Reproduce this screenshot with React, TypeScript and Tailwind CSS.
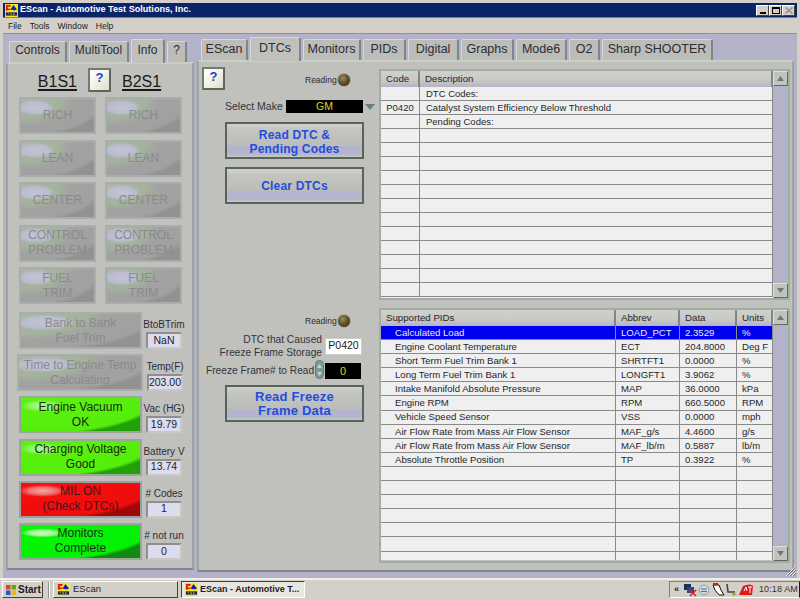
import React from "react";

const GRAY = "border-2 border-[#a9aeaa] text-[#8a8a8c] bg-[radial-gradient(ellipse_26%_24%_at_20%_26%,#c3c3d4_0%,#bcbcd0_70%,transparent_100%),radial-gradient(ellipse_60%_80%_at_10%_0%,#a8b8a2_0%,#a3b29c_75%,transparent_100%),radial-gradient(ellipse_104%_122%_at_15%_-10%,#a3a3a3_0%,#a1a1a1_92%,#929292_100%)]";
const LIME = "border-2 border-[#9aa69a] text-[#1c2a10] bg-[radial-gradient(ellipse_18%_18%_at_18%_24%,#b6f79a_0%,#8ff568_60%,transparent_100%),radial-gradient(ellipse_104%_122%_at_15%_-10%,#5bf40e_0%,#55ee0c_94%,#22a008_100%)]";
const RED = "border-2 border-[#9aa0a0] text-[#3a1a20] bg-[radial-gradient(ellipse_20%_18%_at_18%_24%,#f4a8a8_0%,#f07070_60%,transparent_100%),radial-gradient(ellipse_104%_122%_at_15%_-10%,#fb0f0f_0%,#ee0c0c_94%,#a00808_100%)]";
const GREEN = "border-2 border-[#9aa69a] text-[#143014] bg-[radial-gradient(ellipse_18%_14%_at_18%_24%,#d0f8c0_0%,#a0f890_60%,transparent_100%),radial-gradient(ellipse_104%_122%_at_15%_-10%,#06fa06_0%,#04f004_94%,#108a10_100%)]";

function Logo({ s = 14 }: { s?: number }) {
  return (
    <svg width={s} height={s} viewBox="0 0 14 14" className="shrink-0">
      <rect width="14" height="14" fill="#f8e818" />
      <rect x="1" y="1" width="5" height="2" fill="#e01010" />
      <rect x="1" y="3" width="2" height="4" fill="#e01010" />
      <rect x="1" y="5" width="5" height="1.5" fill="#e01010" />
      <path d="M6 6 L9 1 L13 6 L10 7 Z" fill="#1020c0" />
      <rect x="1" y="9" width="12" height="3.5" fill="#202050" />
      <rect x="3" y="10" width="1" height="1" fill="#f8e818" />
      <rect x="6" y="10" width="1" height="2" fill="#f8e818" />
      <rect x="9" y="10" width="1" height="2" fill="#f8e818" />
    </svg>
  );
}

function Tab({ w, active, children, size, pad }: { w: string; active?: boolean; children: React.ReactNode; size: string; pad: string }) {
  return (
    <div
      className={`${w} ${size} ${pad} flex items-center justify-center text-[#2c2c34] border-t border-l border-r-2 border-t-[#d8d8d4] border-l-[#d8d8d4] border-r-[#80858a] rounded-t-[2px] ${active ? "h-[24px] bg-[#c0c0bc] -mb-[1px] z-10" : "h-[21px] bg-[#bcbcb8]"}`}
    >
      {children}
    </div>
  );
}

function Help({ cls }: { cls: string }) {
  return (
    <div className={`${cls} flex items-center justify-center border-2 border-t-[#707a70] border-l-[#707a70] border-r-[#5c665c] border-b-[#5c665c] bg-[linear-gradient(135deg,#ffffff_0%,#f4f2e4_50%,#e0dccc_100%)] text-[#1a3fd0] font-bold text-[13px] pb-[4px]`}>
      ?
    </div>
  );
}

function Status({ cls, tone, a, b }: { cls: string; tone: string; a: string; b?: string }) {
  return (
    <div className={`${cls} ${tone} h-[37px] flex flex-col items-center justify-center text-[12px] leading-[15px]`}>
      <span>{a}</span>
      {b && <span>{b}</span>}
    </div>
  );
}

function Readout({ label, value }: { label: string; value: string }) {
  return (
    <div className="w-[42px] ml-[1px] flex flex-col items-center justify-end">
      <span className="text-[10px] leading-[13px] mb-[1px] whitespace-nowrap text-[#2c2c38]">{label}</span>
      <div className="w-[36px] h-[17px] flex items-center justify-center bg-[#dcdcee] border-2 border-t-[#8f8f8f] border-l-[#8f8f8f] border-r-[#c8c8c8] border-b-[#c8c8c8] text-[10.5px] text-[#22222c]">
        {value}
      </div>
    </div>
  );
}

function ActionButton({ cls, lines, size }: { cls: string; lines: string[]; size: string }) {
  return (
    <div className={`${cls} ${size} ml-[26px] w-[139px] h-[37px] flex flex-col items-center justify-center font-bold leading-[14px] tracking-[0.2px] text-[#1f4fdc] border-2 border-[#55655a] bg-[linear-gradient(180deg,#d2d2cc_0%,#c4c4c0_18%,#bcbcb8_66%,#b4b4cc_68%,#b4b4cc_90%,#c8c8c4_100%)]`}>
      {lines.map((l) => (
        <span key={l}>{l}</span>
      ))}
    </div>
  );
}

function Led() {
  return <div className="w-[14px] h-[14px] rounded-full border border-[#a8a89c] bg-[radial-gradient(circle_at_40%_35%,#9a8e5c_0%,#5e5428_45%,#2e2a14_100%)]" />;
}

function ScrollBtn({ up }: { up?: boolean }) {
  return (
    <div className="w-[15px] h-[15px] shrink-0 flex items-center justify-center bg-[#c0c4bc] border border-t-[#e0e0dc] border-l-[#e0e0dc] border-r-[#5c6a60] border-b-[#5c6a60]">
      <svg width="7" height="5" viewBox="0 0 7 5">
        <path d={up ? "M3.5 0 L7 5 L0 5 Z" : "M0 0 L7 0 L3.5 5 Z"} fill="#6a7a78" />
      </svg>
    </div>
  );
}

function Scrollbar() {
  return (
    <div className="w-[15px] bg-[#b4b2c8] flex flex-col justify-between">
      <ScrollBtn up />
      <ScrollBtn />
    </div>
  );
}

function Head({ w, children }: { w: string; children: React.ReactNode }) {
  return (
    <div className={`${w} h-full flex items-center pl-[5px] text-[9.7px] text-[#26262c] border-r-2 border-[#80858a] bg-[linear-gradient(180deg,#d0d0cc_0%,#c8c8c4_60%,#b4b4c4_100%)]`}>
      {children}
    </div>
  );
}

function Cell({ w, children, cls = "" }: { w: string; children?: React.ReactNode; cls?: string }) {
  return <div className={`${w} h-full pt-[1px] flex items-center border-r border-[#8a8a8a] whitespace-nowrap overflow-hidden ${cls}`}>{children}</div>;
}

const dtc = [
  ["", "DTC Codes:"],
  ["P0420", "Catalyst System Efficiency Below Threshold"],
  ["", "Pending Codes:"],
];

const pids = [
  ["Calculated Load", "LOAD_PCT", "2.3529", "%"],
  ["Engine Coolant Temperature", "ECT", "204.8000", "Deg F"],
  ["Short Term Fuel Trim Bank 1", "SHRTFT1", "0.0000", "%"],
  ["Long Term Fuel Trim Bank 1", "LONGFT1", "3.9062", "%"],
  ["Intake Manifold Absolute Pressure", "MAP", "36.0000", "kPa"],
  ["Engine RPM", "RPM", "660.5000", "RPM"],
  ["Vehicle Speed Sensor", "VSS", "0.0000", "mph"],
  ["Air Flow Rate from Mass Air Flow Sensor", "MAF_g/s", "4.4600", "g/s"],
  ["Air Flow Rate from Mass Air Flow Sensor", "MAF_lb/m", "0.5887", "lb/m"],
  ["Absolute Throttle Position", "TP", "0.3922", "%"],
];

const blank15 = Array.from({ length: 15 }, (_, i) => dtc[i] ?? ["", ""]);
const blank17 = Array.from({ length: 17 }, (_, i) => pids[i] ?? ["", "", "", ""]);

const L = "text-[12px]";
const R = "text-[12.5px]";

export default function App() {
  return (
    <div className="w-[800px] h-[600px] overflow-hidden flex flex-col bg-[#d4d0c8] font-['Liberation_Sans',Arial,sans-serif] relative">
      <div className="mx-[3px] mt-[3px] h-[14px] bg-[#0a246a] flex items-center text-white text-[9.1px] font-bold pl-[2px] gap-[2px] shrink-0">
        <Logo s={13} />
        <span className="flex-1 whitespace-nowrap">EScan - Automotive Test Solutions, Inc.</span>
        <div className="flex items-center mr-[2px]">
          {["min", "max", "close"].map((k) => (
            <div key={k} className="w-[13px] h-[11px] flex items-center justify-center bg-[#d4d0c8] border border-t-white border-l-white border-r-[#404040] border-b-[#404040]">
              {k === "min" && <div className="w-[6px] h-[2px] bg-black mt-[5px]" />}
              {k === "max" && <div className="w-[8px] h-[7px] border border-black border-t-2" />}
              {k === "close" && (
                <svg width="8" height="7" viewBox="0 0 8 7">
                  <path d="M0.5 0.5 L7.5 6.5 M7.5 0.5 L0.5 6.5" stroke="#908f8a" strokeWidth="1.4" />
                </svg>
              )}
            </div>
          ))}
        </div>
      </div>
      <div className="mx-[3px] h-[17px] flex items-center gap-[8px] pl-[5px] pt-[2px] text-[8.5px] text-[#1c1c1c] border-t border-t-[#808080] border-b border-b-[#909090] shrink-0">
        <span>File</span>
        <span>Tools</span>
        <span>Window</span>
        <span>Help</span>
      </div>

      <div className="mx-[3px] h-[544px] bg-[#b4b2c8] flex gap-[3px] pl-[3px] shrink-0">
        <div className="w-[188px] flex flex-col">
          <div className="h-[28px] flex items-end pl-[3px] gap-[2px] shrink-0">
            <Tab w="w-[58px]" size={L} pad="pb-[5px]">Controls</Tab>
            <Tab w="w-[60px]" size={L} pad="pb-[5px]">MultiTool</Tab>
            <Tab w="w-[34px]" size={L} pad="pb-[4px]" active>Info</Tab>
            <Tab w="w-[20px]" size={L} pad="pb-[5px]">?</Tab>
          </div>
          <div className="h-[508px] bg-[#c0c0bc] border-2 border-t-[#c8d0c4] border-l-[#9aa39c] border-r-[#9aa39c] border-b-[#80858a] shrink-0">
            <div className="flex items-center justify-center gap-[11px] pt-[4px] pr-[1px]">
              <span className="mt-[3px] text-[16px] leading-[17px] underline decoration-2 underline-offset-[2px] text-[#1a1a1a]">B1S1</span>
              <Help cls="w-[23px] h-[24px]" />
              <span className="mt-[3px] text-[16px] leading-[17px] underline decoration-2 underline-offset-[2px] text-[#1a1a1a]">B2S1</span>
            </div>
            <div className="grid grid-cols-[77px_77px] gap-x-[9px] gap-y-[5.5px] ml-[11px] mt-[5px]">
              <Status cls="" tone={GRAY} a="RICH" />
              <Status cls="" tone={GRAY} a="RICH" />
              <Status cls="" tone={GRAY} a="LEAN" />
              <Status cls="" tone={GRAY} a="LEAN" />
              <Status cls="" tone={GRAY} a="CENTER" />
              <Status cls="" tone={GRAY} a="CENTER" />
              <Status cls="" tone={GRAY} a="CONTROL" b="PROBLEM" />
              <Status cls="" tone={GRAY} a="CONTROL" b="PROBLEM" />
              <Status cls="" tone={GRAY} a="FUEL" b="TRIM" />
              <Status cls="" tone={GRAY} a="FUEL" b="TRIM" />
            </div>
            <div className="flex flex-col gap-[5.2px] mt-[8px]">
              <div className="flex">
                <Status cls="ml-[11px] w-[123px]" tone={GRAY} a="Bank to Bank" b="Fuel Trim" />
                <Readout label="BtoBTrim" value="NaN" />
              </div>
              <div className="flex">
                <Status cls="ml-[9px] w-[126px]" tone={GRAY} a="Time to Engine Temp" b="Calculating" />
                <Readout label="Temp(F)" value="203.00" />
              </div>
              <div className="flex">
                <Status cls="ml-[11px] w-[123px]" tone={LIME} a="Engine Vacuum" b="OK" />
                <Readout label="Vac (HG)" value="19.79" />
              </div>
              <div className="flex">
                <Status cls="ml-[11px] w-[123px]" tone={LIME} a="Charging Voltage" b="Good" />
                <Readout label="Battery V" value="13.74" />
              </div>
              <div className="flex">
                <Status cls="ml-[11px] w-[123px]" tone={RED} a="MIL ON" b="(Check DTCs)" />
                <Readout label="# Codes" value="1" />
              </div>
              <div className="flex">
                <Status cls="ml-[11px] w-[123px]" tone={GREEN} a="Monitors" b="Complete" />
                <Readout label="# not run" value="0" />
              </div>
            </div>
          </div>
        </div>

        <div className="w-[597px] flex flex-col">
          <div className="h-[26px] flex items-end pl-[4px] gap-[2px] shrink-0">
            <Tab w="w-[47px]" size={R} pad="pb-[2px]">EScan</Tab>
            <Tab w="w-[51px]" size={R} pad="pb-[2px]" active>DTCs</Tab>
            <Tab w="w-[58px]" size={R} pad="pb-[2px]">Monitors</Tab>
            <Tab w="w-[43px]" size={R} pad="pb-[2px]">PIDs</Tab>
            <Tab w="w-[51px]" size={R} pad="pb-[2px]">Digital</Tab>
            <Tab w="w-[53px]" size={R} pad="pb-[2px]">Graphs</Tab>
            <Tab w="w-[51px]" size={R} pad="pb-[2px]">Mode6</Tab>
            <Tab w="w-[31px]" size={R} pad="pb-[2px]">O2</Tab>
            <Tab w="w-[111px]" size={R} pad="pb-[2px]">Sharp SHOOTER</Tab>
          </div>
          <div className="h-[512px] bg-[#c0c0bc] border-2 border-t-[#c8d0c4] border-l-[#9aa39c] border-r-[#9aa39c] border-b-[#80858a] flex shrink-0">
            <div className="w-[180px] flex flex-col shrink-0">
              <div className="flex items-start mt-[5px]">
                <Help cls="ml-[3px] w-[23px] h-[23px]" />
                <span className="ml-[80px] w-[32px] mt-[6px] text-[8.5px] leading-[14px] text-[#2c2c38]">Reading</span>
                <div className="mt-[6px]"><Led /></div>
              </div>
              <div className="flex items-center mt-[10px] pl-[26px] h-[13px]">
                <span className="w-[57px] text-[10.5px] whitespace-nowrap text-[#34343c]">Select Make</span>
                <div className="ml-[4px] w-[77px] h-[13px] bg-black text-[#d8d820] text-[10.5px] flex items-center justify-center">GM</div>
                <svg width="10" height="6" viewBox="0 0 10 6" className="ml-[2px]">
                  <path d="M0 0 L10 0 L5 6 Z" fill="#5f7f80" />
                </svg>
              </div>
              <ActionButton cls="mt-[9px] pt-[2px]" size="text-[12px]" lines={["Read DTC &", "Pending Codes"]} />
              <ActionButton cls="mt-[8px]" size="text-[12px]" lines={["Clear DTCs"]} />
              <div className="flex items-center mt-[110px] ml-[106px] h-[14px]">
                <span className="w-[32px] text-[8.5px] text-[#2c2c38]">Reading</span>
                <Led />
              </div>
              <div className="flex items-center mt-[5px] h-[26px]">
                <div className="w-[123px] text-right text-[10.2px] leading-[13px] text-[#34343c] whitespace-nowrap">
                  <div>DTC that Caused</div>
                  <div>Freeze Frame Storage</div>
                </div>
                <div className="ml-[3px] w-[37px] h-[17px] bg-white border border-[#c8d0c8] flex items-center justify-center text-[10.5px] text-[#1a1a1a]">P0420</div>
              </div>
              <div className="flex items-start mt-[1px] h-[19px]">
                <span className="ml-[7px] w-[108px] mt-[4px] text-[10.2px] leading-[13px] whitespace-nowrap text-[#34343c]">Freeze Frame# to Read</span>
                <div className="ml-[1px] w-[9px] h-[19px] rounded-full bg-[#7f9a9c] border border-[#5f7a7c] flex flex-col items-center justify-center">
                  <svg width="5" height="12" viewBox="0 0 5 12">
                    <path d="M2.5 0 L5 4 L0 4 Z M0 8 L5 8 L2.5 12 Z" fill="#c8d4d4" />
                  </svg>
                </div>
                <div className="ml-[1px] mt-[3px] w-[36px] h-[16px] bg-black text-[#d8d820] text-[11px] flex items-center justify-center">0</div>
              </div>
              <ActionButton cls="mt-[6px]" size="text-[13px]" lines={["Read Freeze", "Frame Data"]} />
            </div>

            <div className="w-[412px] flex flex-col mt-[7px] shrink-0">
              <div className="h-[231px] w-[411px] border-2 border-[#9fb0a2] flex">
                <div className="w-[392px] flex flex-col text-[9.5px] text-[#26262c]">
                  <div className="h-[16px] flex shrink-0">
                    <Head w="w-[39px]">Code</Head>
                    <Head w="w-[353px]">Description</Head>
                  </div>
                  <div className="flex-1 overflow-hidden bg-[#efefef]">
                    {blank15.map((r, i) => (
                      <div key={i} className="h-[14px] flex border-b border-[#8a8a8a]">
                        <Cell w="w-[39px]" cls="justify-center">{r[0]}</Cell>
                        <Cell w="w-[353px]" cls="pl-[6px]">{r[1]}</Cell>
                      </div>
                    ))}
                  </div>
                </div>
                <Scrollbar />
              </div>
              <div className="h-[255px] w-[411px] mt-[8px] border-2 border-[#9fb0a2] flex">
                <div className="w-[392px] flex flex-col text-[9.6px] text-[#26262c]">
                  <div className="h-[16px] flex shrink-0">
                    <Head w="w-[235px]">Supported PIDs</Head>
                    <Head w="w-[64px]">Abbrev</Head>
                    <Head w="w-[57px]">Data</Head>
                    <Head w="w-[36px]">Units</Head>
                  </div>
                  <div className="h-[234px] overflow-hidden bg-[#efefef]">
                    {blank17.map((r, i) => (
                      <div key={i} className={`h-[14.1px] flex border-b border-[#8a8a8a] ${i === 0 ? "bg-[#0000f0] text-[#e8e8f8]" : ""}`}>
                        <Cell w="w-[235px]" cls="pl-[14px]">{r[0]}</Cell>
                        <Cell w="w-[64px]" cls="pl-[5px]">{r[1]}</Cell>
                        <Cell w="w-[57px]" cls="pl-[5px]">{r[2]}</Cell>
                        <Cell w="w-[36px]" cls="pl-[5px]">{r[3]}</Cell>
                      </div>
                    ))}
                  </div>
                </div>
                <Scrollbar />
              </div>
            </div>
          </div>
        </div>
      </div>

      <div className="flex-1 border-t-2 border-t-[#f0eee8] flex items-end pb-[2px] pl-[2px] text-[10px] text-[#1c1c1c]">
        <div className="w-[41px] h-[17px] flex items-center gap-[1px] pl-[2px] font-bold border border-t-white border-l-white border-r-[#404040] border-b-[#404040]">
          <svg width="12" height="12" viewBox="0 0 12 12" className="shrink-0">
            <rect x="1" y="1" width="4.5" height="4.5" fill="#d84820" />
            <rect x="6.5" y="1" width="4.5" height="4.5" fill="#58a820" />
            <rect x="1" y="6.5" width="4.5" height="4.5" fill="#2858c8" />
            <rect x="6.5" y="6.5" width="4.5" height="4.5" fill="#e8b818" />
          </svg>
          <span>Start</span>
        </div>
        <div className="ml-[5px] w-[2px] h-[16px] border-l border-l-[#909090] border-r border-r-white" />
        <div className="ml-[3px] w-[125px] h-[17px] flex items-center gap-[3px] pl-[3px] border border-t-white border-l-white border-r-[#404040] border-b-[#404040]">
          <Logo s={13} />
          <span className="text-[9.5px]">EScan</span>
        </div>
        <div className="ml-[3px] w-[124px] h-[17px] flex items-center gap-[2px] pl-[3px] font-bold text-[9px] bg-[#e8e6e0] border border-t-[#404040] border-l-[#404040] border-r-white border-b-white whitespace-nowrap overflow-hidden">
          <Logo s={13} />
          <span>EScan - Automotive T...</span>
        </div>
        <div className="ml-auto w-[131px] h-[17px] flex items-center pl-[4px] border border-t-[#808080] border-l-[#808080] border-b-white">
          <span className="text-[9px] font-bold w-[10px]">«</span>
          <svg width="70" height="15" viewBox="0 0 70 15" className="shrink-0">
            <rect x="0" y="2" width="7" height="6" fill="#1c3060" />
            <rect x="3" y="5" width="7" height="6" fill="#304890" />
            <path d="M6 8 L12 14 M12 8 L6 14" stroke="#e02020" strokeWidth="1.6" />
            <circle cx="20" cy="8" r="5" fill="#c8d8e0" stroke="#90a4b0" />
            <path d="M17 7 H23 M17 9.5 H23" stroke="#607080" />
            <path d="M29 3 L35 3 L37 8 L40 13 L35 13 L31 8 Z" fill="#ffffff" stroke="#111" />
            <rect x="29" y="1" width="5" height="2" fill="#d01818" />
            <path d="M43 2 L44 10 H51" fill="none" stroke="#444" strokeWidth="1.6" />
            <circle cx="50" cy="12" r="1.6" fill="#88a820" />
            <path d="M55 13 L59 4 Q67 1 69 4 L68 13 Z" fill="#e01818" />
            <path d="M60 9 L62 5 L63 9 M64 5 H68 M66 5 V11" stroke="#fff" fill="none" />
          </svg>
          <span className="ml-[5px] whitespace-nowrap text-[9px] tracking-[0.1px] text-[#30303a]">10:18 AM</span>
        </div>
      </div>

      <svg width="12" height="12" viewBox="0 0 12 12" className="absolute left-[785px] top-[565px]">
        <path d="M1 11 L11 1 M4 11 L11 4 M7 11 L11 7" stroke="#f0f0f0" strokeWidth="1" />
        <path d="M2 11 L11 2 M5 11 L11 5 M8 11 L11 8" stroke="#707070" strokeWidth="1" />
      </svg>
    </div>
  );
}
